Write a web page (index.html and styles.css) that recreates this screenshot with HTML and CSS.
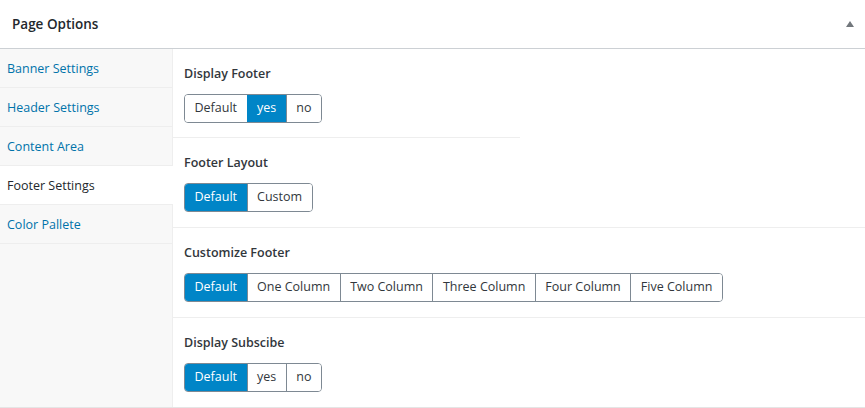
FILE: index.html
```html
<!DOCTYPE html>
<html>
<head>
<meta charset="utf-8">
<link rel="stylesheet" href="styles.css">
</head>
<body>
<div class="box">
  <div class="box-head">
    <h2 class="box-title">Page Options</h2>
    <span class="toggle"></span>
  </div>
  <div class="box-body">
    <ul class="tabs">
      <li class="tab">Banner Settings</li>
      <li class="tab">Header Settings</li>
      <li class="tab">Content Area</li>
      <li class="tab active">Footer Settings</li>
      <li class="tab">Color Pallete</li>
    </ul>
    <div class="panel">
      <div class="field short">
        <div class="label">Display Footer</div>
        <div class="group">
          <span class="btn">Default</span><span class="btn on">yes</span><span class="btn">no</span>
        </div>
      </div>
      <div class="field">
        <div class="label">Footer Layout</div>
        <div class="group">
          <span class="btn on">Default</span><span class="btn">Custom</span>
        </div>
      </div>
      <div class="field">
        <div class="label">Customize Footer</div>
        <div class="group">
          <span class="btn on">Default</span><span class="btn">One Column</span><span class="btn">Two Column</span><span class="btn">Three Column</span><span class="btn">Four Column</span><span class="btn">Five Column</span>
        </div>
      </div>
      <div class="field last">
        <div class="label">Display Subscibe</div>
        <div class="group">
          <span class="btn on">Default</span><span class="btn">yes</span><span class="btn">no</span>
        </div>
      </div>
    </div>
  </div>
</div>
</body>
</html>
```
FILE: styles.css
```css
* { box-sizing: border-box; }
html, body { margin: 0; padding: 0; background: #fff; }
body { font-family: "Open Sans", "Noto Sans", sans-serif; font-size: 12.5px; color: #23282d; }
.box { width: 865px; height: 408px; border-bottom: 1px solid #e5e5e5; display: flex; flex-direction: column; }
.box-head { height: 49px; border-bottom: 1px solid #ccd0d4; display: flex; align-items: center; justify-content: space-between; padding: 0 11px 1px 12px; flex: none; }
.box-title { margin: 0; font-size: 13.5px; font-weight: 600; color: #23282d; }
.toggle { width: 0; height: 0; border-left: 4px solid transparent; border-right: 4px solid transparent; border-bottom: 6px solid #72777c; }
.box-body { flex: 1; display: flex; }
.tabs { list-style: none; margin: 0; padding: 0; width: 173px; background: #f8f8f8; border-right: 1px solid #eee; flex: none; }
.tab { height: 39px; padding-top: 1px; line-height: 37px; padding-left: 7px; color: #0073aa; border-bottom: 1px solid #eee; }
.tab.active { background: #fff; color: #23282d; margin-right: -1px; }
.panel { flex: 1; display: flex; flex-direction: column; }
.field { padding: 16px 12px 15px 11px; border-bottom: 1px solid #eee; }
.field.short { width: 347px; padding-bottom: 14px; }
.field.last { border-bottom: none; }
.label { font-weight: 600; font-size: 12.5px; color: #32373c; line-height: 18px; margin-bottom: 11px; }
.group { display: inline-flex; border: 1px solid #7e8993; border-radius: 4px; overflow: hidden; }
.btn { display: block; height: 27px; line-height: 26px; padding: 0 9.5px; color: #32373c; background: #fff; border-left: 1px solid #7e8993; }
.btn:first-child { border-left: none; }
.btn.on { background: #0085c7; color: #fff; border-left-color: #0085c7; }
```
